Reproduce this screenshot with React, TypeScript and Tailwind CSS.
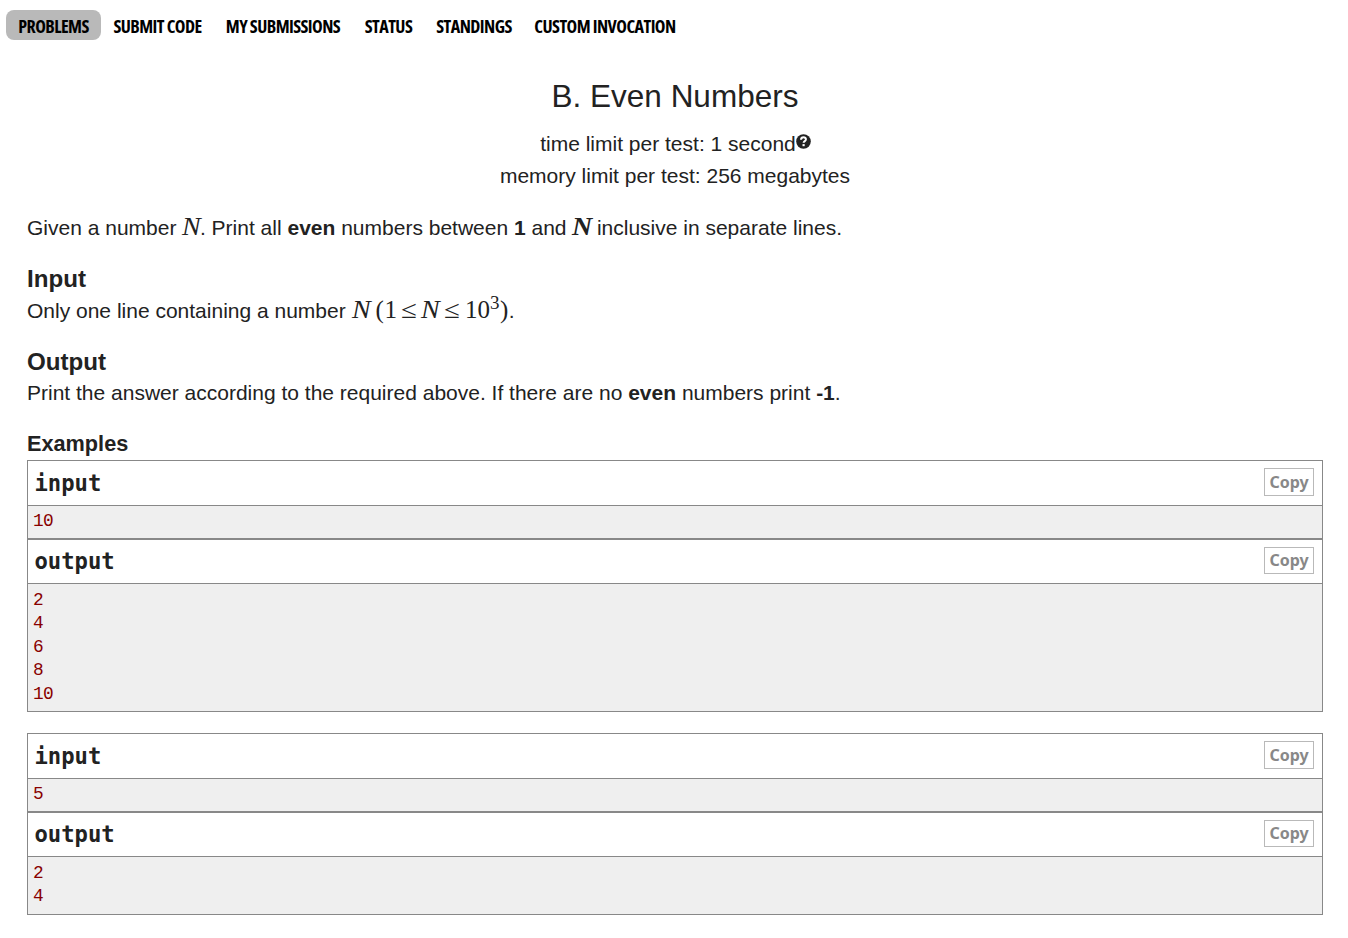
import type { ReactNode } from "react";

const navItems = [
  { label: "PROBLEMS", box: "w-[95px] bg-[#b9b9b9]" },
  { label: "SUBMIT CODE", box: "w-[113px]" },
  { label: "MY SUBMISSIONS", box: "w-[138px]" },
  { label: "STATUS", box: "w-[73px]" },
  { label: "STANDINGS", box: "w-[98px]" },
  { label: "CUSTOM INVOCATION", box: "w-[164px]" },
];

const examples = [
  { input: ["10"], output: ["2", "4", "6", "8", "10"], className: "" },
  { input: ["5"], output: ["2", "4"], className: "mt-[21px]" },
];

function Var({ children, className = "" }: { children: ReactNode; className?: string }) {
  return (
    <span className={`inline-block h-[25px] font-['Liberation_Serif',serif] text-[25px] leading-[25px] ${className}`}>
      {children}
    </span>
  );
}

function N({ className = "" }: { className?: string }) {
  return <Var className={`origin-left scale-x-112 italic ${className}`}>N</Var>;
}

function Block({ title, lines, first }: { title: string; lines: string[]; first?: boolean }) {
  return (
    <div className="border border-[#888]">
      <div
        className={`flex items-start justify-between border-b border-[#888] pt-[7px] pr-2 pl-[6.5px] ${first ? "h-[45px]" : "h-[44px]"}`}
      >
        <span
          className={`font-['DejaVu_Sans_Mono',monospace] text-[22.2px] font-bold ${first ? "leading-[30px]" : "leading-[29px]"}`}
        >
          {title}
        </span>
        <button
          className={`w-[50px] border border-[#b9b9b9] text-center font-['Noto_Sans',sans-serif] text-[16px] font-bold text-[#888] ${first ? "h-[28px] leading-[26px]" : "h-[27px] leading-[25px]"}`}
        >
          Copy
        </button>
      </div>
      <pre
        className={`bg-[#efefef] px-[5px] font-['Liberation_Mono',monospace] text-[17.8px] leading-[23.5px] tracking-[-0.65px] text-[#880000] ${first ? "h-[32px] pt-[4px]" : "pt-[4.5px] pb-[5px]"}`}
      >
        {lines.join("\n")}
      </pre>
    </div>
  );
}

export default function App() {
  return (
    <div className="h-[938px] overflow-hidden bg-white font-['Liberation_Sans',Arial,sans-serif] text-[21px] leading-[31.5px] text-[#222]">
      <nav className="flex pt-[10px] pl-[6px] font-['Open_Sans',sans-serif] text-[18px] leading-[32px] font-bold tracking-[-0.55px] text-black [font-stretch:75%]">
        {navItems.map((item) => (
          <a key={item.label} className={`flex h-[30px] shrink-0 justify-center rounded-[8px] whitespace-nowrap ${item.box}`}>
            <span>{item.label}</span>
          </a>
        ))}
      </nav>
      <main className="pr-[25px] pl-[27px]">
        <header className="pt-[37px] text-center">
          <h1 className="text-[31.5px] leading-[38px]">B. Even Numbers</h1>
          <div className="mt-[13px] h-[32px] pl-[1px] leading-[32px]">
            time limit per test: 1 second
            <svg className="mb-[2px] inline-block h-[15px] w-[15px] align-baseline" viewBox="0 0 15 15">
              <circle cx="7.5" cy="7.5" r="7.3" fill="#222" />
              <path d="M5 5.8C5.1 2.4 10.2 2.7 9.9 5.5C9.8 7.1 7.7 7.1 7.6 8.8" fill="none" stroke="#fff" strokeWidth="2" />
              <path d="M6.5 10.1h2.2v2.1H6.5z" fill="#fff" />
            </svg>
          </div>
          <div className="h-[32px] leading-[32px]">memory limit per test: 256 megabytes</div>
        </header>
        <p className="mt-[20px] h-[32px]">
          Given a number <N className="w-[17.7px]" />. Print all <b>even</b> numbers between <b>1</b> and{" "}
          <N className="w-[18.7px] font-bold" /> inclusive in separate lines.
        </p>
        <h2 className="mt-[19px] h-[32px] text-[24.15px] font-bold">Input</h2>
        <p className="h-[32px]">
          Only one line containing a number <N className="w-[18px]" />{" "}
          <Var className="w-[9px]">(</Var>
          <Var className="w-[17px]">1</Var>
          <Var className="w-[20px] origin-left scale-x-115">≤</Var>
          <N className="w-[22.5px]" />
          <Var className="w-[21px] origin-left scale-x-115">≤</Var>
          <Var>
            10<span className="relative -top-[9px] mr-[0.5px] text-[19px]">3</span>)
          </Var>
          <span className="ml-[0.5px]">.</span>
        </p>
        <h2 className="mt-[19px] h-[31px] text-[24.15px] font-bold">Output</h2>
        <p className="h-[32px]">
          Print the answer according to the required above. If there are no <b>even</b> numbers print <b>-1</b>.
        </p>
        <h3 className="mt-[19px] h-[32px] text-[21.7px] font-bold">Examples</h3>
        {examples.map((example, index) => (
          <section key={index} className={example.className}>
            <Block title="input" lines={example.input} first />
            <Block title="output" lines={example.output} />
          </section>
        ))}
      </main>
    </div>
  );
}
